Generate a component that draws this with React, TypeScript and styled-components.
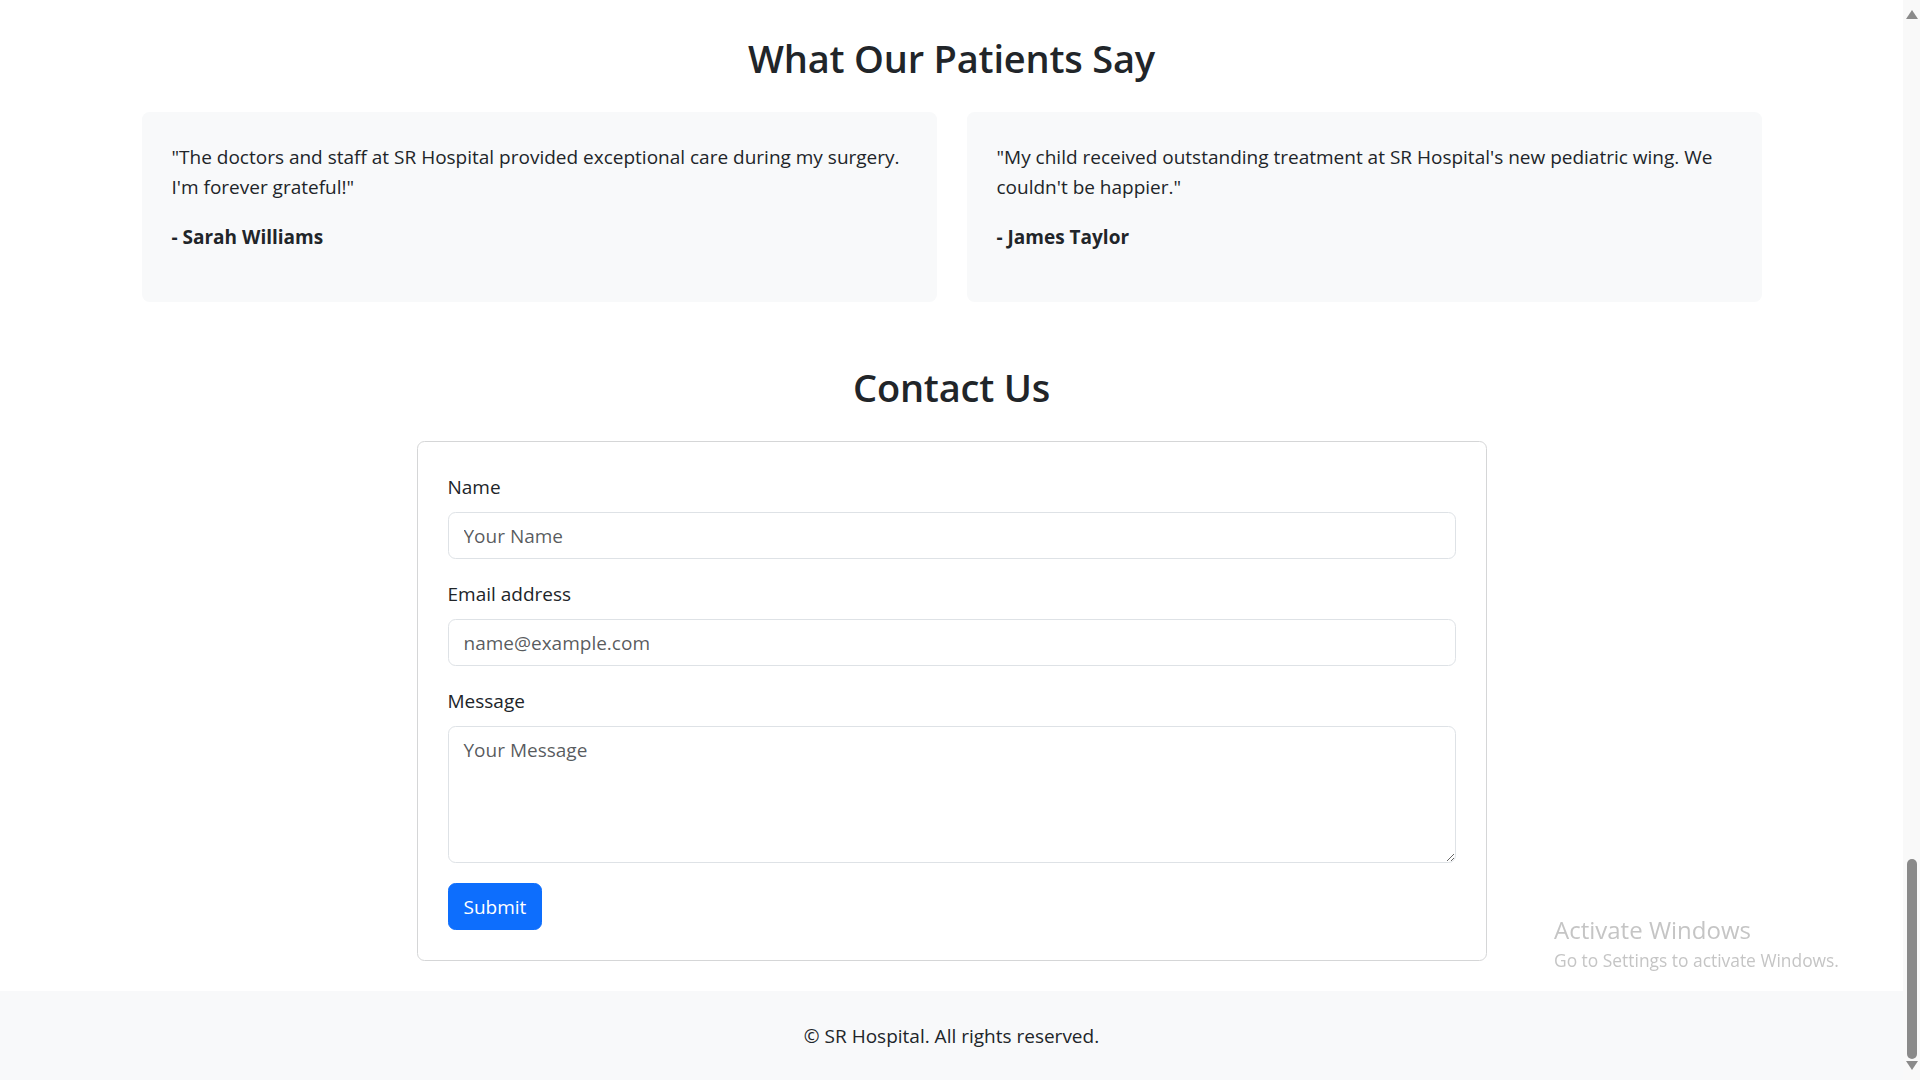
import React from "react";
import styled, { createGlobalStyle } from "styled-components";

const GlobalStyle = createGlobalStyle`
  *, *::before, *::after { box-sizing: border-box; }
  html, body {
    margin: 0;
    padding: 0;
    overflow: hidden;
  }
  body {
    font-family: "Open Sans", "Noto Sans", sans-serif;
    font-size: 19px;
    line-height: 30px;
    color: #212529;
    background: #ffffff;
  }
`;

const Screen = styled.div`
  display: flex;
  height: 1080px;
  width: 100%;
`;

const Page = styled.div`
  flex: 1;
  min-width: 0;
  display: flex;
  flex-direction: column;
`;

const Main = styled.main`
  flex: 1;
`;

const Container = styled.div`
  width: 1650px;
  max-width: 100%;
  margin: 0 auto;
  padding: 0 15px;
`;

const Section = styled.section<{ $top: number }>`
  padding-top: ${(p) => p.$top}px;
`;

const SectionTitle = styled.h2`
  margin: 0 0 30px;
  font-size: 38px;
  font-weight: 600;
  line-height: 48px;
  letter-spacing: -0.2px;
  text-align: center;
  color: #212529;
`;

const CardRow = styled.div`
  display: grid;
  grid-template-columns: 1fr 1fr;
  gap: 30px;
`;

const TestimonialCard = styled.div`
  background: #f8f9fa;
  border-radius: 7.5px;
  padding: 30px;
`;

const Quote = styled.p`
  margin: 0 0 20px;
`;

const Author = styled.p`
  margin: 0 0 20px;
  font-weight: 700;
`;

const FormColumn = styled.div`
  width: 1070px;
  margin: 0 auto 30px;
`;

const FormCard = styled.form`
  border: 1px solid #d5d6d7;
  border-radius: 7.5px;
  padding: 30px;
`;

const Field = styled.div`
  margin-bottom: 20px;
`;

const Label = styled.label`
  display: block;
  margin-bottom: 10px;
  font-size: 19px;
  line-height: 30px;
`;

const inputStyles = `
  display: block;
  width: 100%;
  padding: 7.5px 15px;
  font-family: inherit;
  font-size: 19px;
  line-height: 30px;
  color: #212529;
  background: #ffffff;
  border: 1px solid #dee2e6;
  border-radius: 7.5px;
  outline: none;
  &::placeholder {
    color: rgba(33, 37, 41, 0.75);
    opacity: 1;
  }
`;

const TextInput = styled.input`
  ${inputStyles}
`;

const TextArea = styled.textarea`
  ${inputStyles}
  resize: vertical;
  height: 137px;
`;

const SubmitButton = styled.button`
  display: inline-block;
  padding: 7.5px 15px;
  font-family: inherit;
  font-size: 19px;
  line-height: 30px;
  color: #ffffff;
  background: #0d6efd;
  border: 1px solid #0d6efd;
  border-radius: 7.5px;
  cursor: pointer;
`;

const Footer = styled.footer`
  background: #f8f9fa;
  padding: 30px 0;
  text-align: center;
`;

const FooterText = styled.p`
  margin: 0;
`;

const Scrollbar = styled.div`
  width: 17px;
  flex: none;
  background: #f9f9f9;
  display: flex;
  flex-direction: column;
  align-items: center;
  padding: 10px 0 10px;
`;

const ScrollSpacer = styled.div`
  flex: 1;
`;

const ScrollThumb = styled.div`
  width: 10px;
  height: 200px;
  margin-bottom: 2px;
  border-radius: 5px;
  background: #8a8a8a;
`;

const Watermark = styled.div`
  position: fixed;
  left: 1554px;
  top: 914px;
  color: #c5c5c5;
  pointer-events: none;
  line-height: 1.3;
`;

const WatermarkTitle = styled.div`
  font-size: 24px;
`;

const WatermarkSub = styled.div`
  margin-top: 4px;
  font-size: 17.4px;
`;

const Arrow = ({ up }: { up?: boolean }) => (
  <svg width="12" height="9" viewBox="0 0 12 9">
    <polygon
      points={up ? "6,0 12,9 0,9" : "0,0 12,0 6,9"}
      fill="#8a8a8a"
    />
  </svg>
);

const testimonials = [
  {
    quote:
      '"The doctors and staff at SR Hospital provided exceptional care during my surgery. I\'m forever grateful!"',
    author: "- Sarah Williams",
  },
  {
    quote:
      '"My child received outstanding treatment at SR Hospital\'s new pediatric wing. We couldn\'t be happier."',
    author: "- James Taylor",
  },
];

export default function App() {
  return (
    <>
      <GlobalStyle />
      <Screen>
        <Page>
          <Main>
            <Section $top={34}>
              <Container>
                <SectionTitle>What Our Patients Say</SectionTitle>
                <CardRow>
                  {testimonials.map((t) => (
                    <TestimonialCard key={t.author}>
                      <Quote>{t.quote}</Quote>
                      <Author>{t.author}</Author>
                    </TestimonialCard>
                  ))}
                </CardRow>
              </Container>
            </Section>
            <Section $top={61}>
              <Container>
                <SectionTitle>Contact Us</SectionTitle>
                <FormColumn>
                  <FormCard onSubmit={(e) => e.preventDefault()}>
                    <Field>
                      <Label htmlFor="name">Name</Label>
                      <TextInput id="name" type="text" placeholder="Your Name" />
                    </Field>
                    <Field>
                      <Label htmlFor="email">Email address</Label>
                      <TextInput
                        id="email"
                        type="email"
                        placeholder="name@example.com"
                      />
                    </Field>
                    <Field>
                      <Label htmlFor="message">Message</Label>
                      <TextArea id="message" rows={4} placeholder="Your Message" />
                    </Field>
                    <SubmitButton type="submit">Submit</SubmitButton>
                  </FormCard>
                </FormColumn>
              </Container>
            </Section>
          </Main>
          <Footer>
            <FooterText>© SR Hospital. All rights reserved.</FooterText>
          </Footer>
        </Page>
        <Scrollbar>
          <Arrow up />
          <ScrollSpacer />
          <ScrollThumb />
          <Arrow />
        </Scrollbar>
      </Screen>
      <Watermark>
        <WatermarkTitle>Activate Windows</WatermarkTitle>
        <WatermarkSub>Go to Settings to activate Windows.</WatermarkSub>
      </Watermark>
    </>
  );
}
